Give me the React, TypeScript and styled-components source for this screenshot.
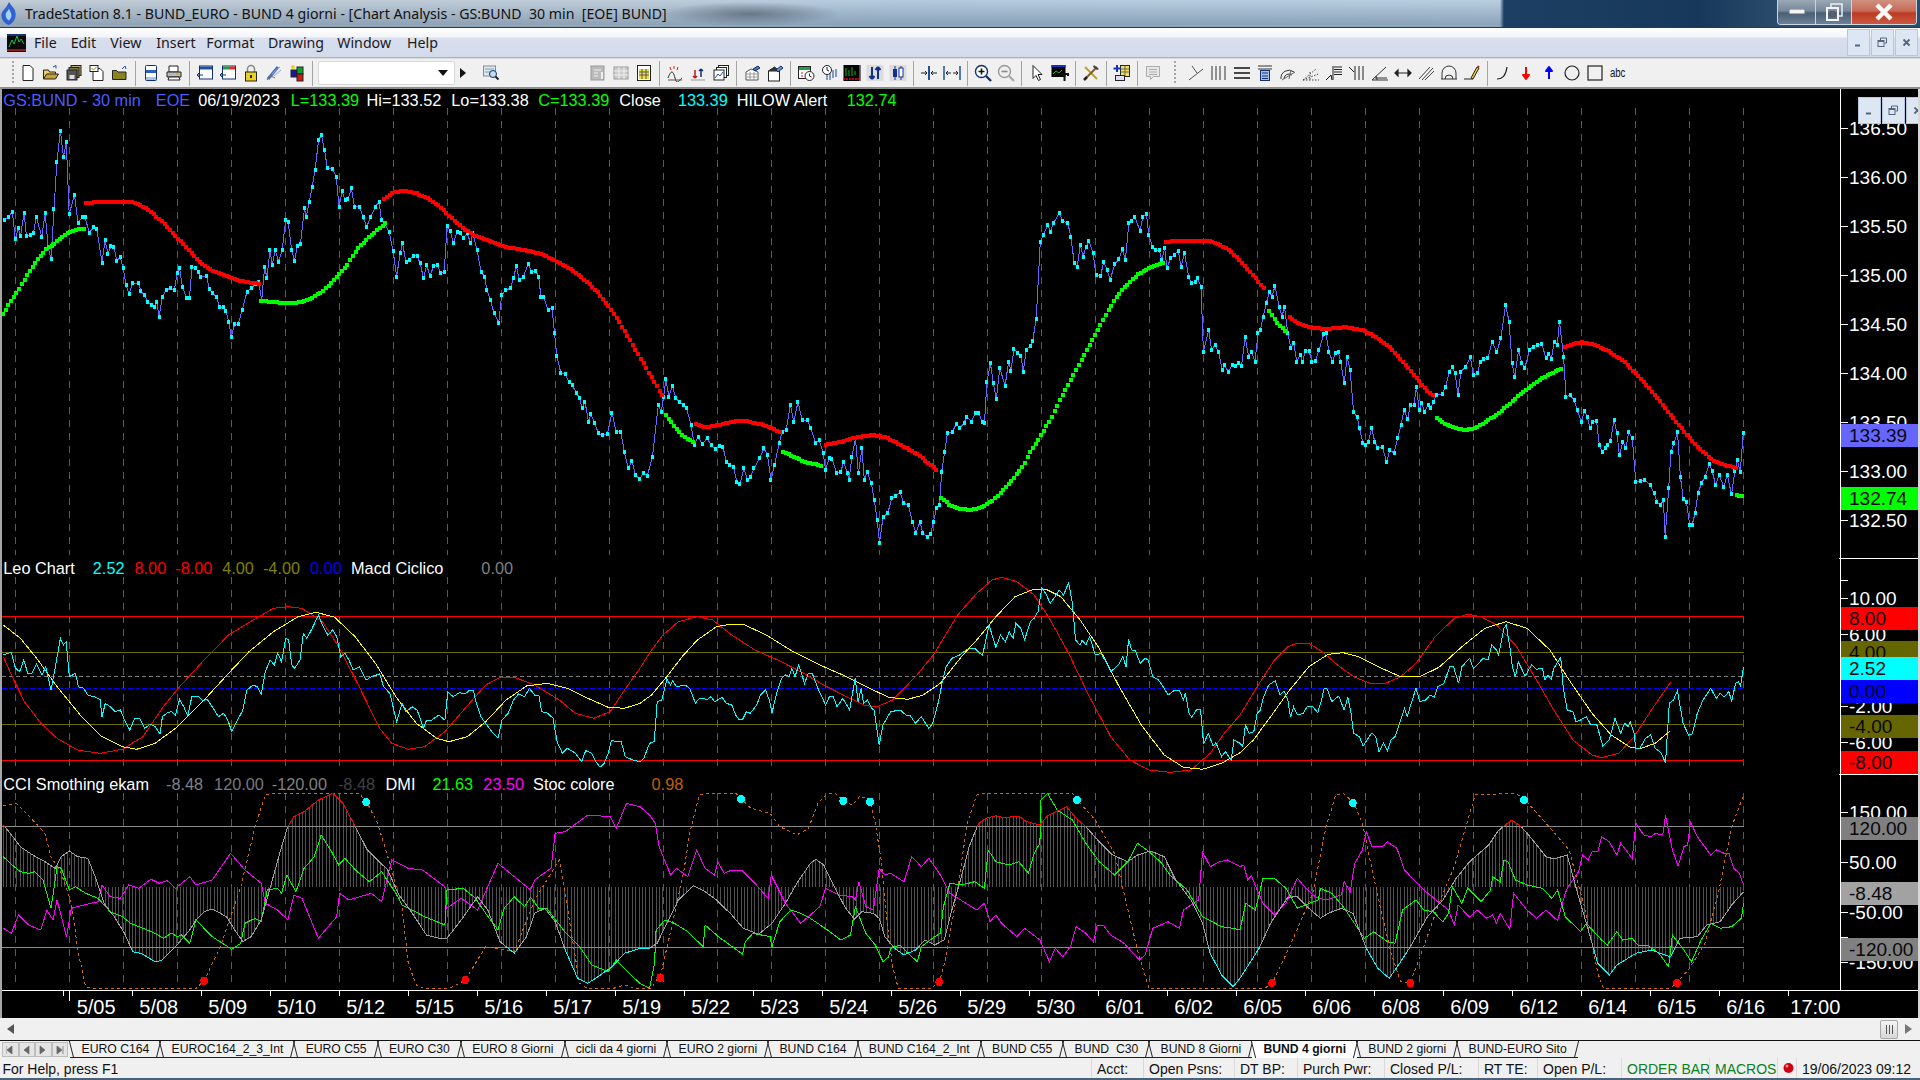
import React from "react";
import styled, { createGlobalStyle } from "styled-components";

const GlobalStyle = createGlobalStyle`
  html, body { margin: 0; padding: 0; background: #000; overflow: hidden; }
  * { box-sizing: border-box; }
`;

/* ---------- traced data: flat x,y pairs read off the crops of the chart ---------- */
type Zone = { x: number; y: number; k: number };
type Pt = [number, number];
const Z8: Zone = { x: 0, y: 540, k: 2.45 };
const Z9: Zone = { x: 0, y: 100, k: 1568 / 920 };
const Z10: Zone = { x: 920, y: 100, k: 1568 / 920 };
const Z11: Zone = { x: 640, y: 560, k: 1568 / 600 };
const Z12: Zone = { x: 1240, y: 560, k: 1568 / 600 };

const conv = (z: Zone, d: number[]): Pt[] => {
  const out: Pt[] = [];
  for (let i = 0; i < d.length; i += 2) out.push([z.x + d[i] / z.k, z.y + d[i + 1] / 3]);
  return out;
};
const join = (...parts: Pt[][]): Pt[] => {
  const out: Pt[] = [];
  parts.forEach((p) => p.forEach((q) => {
    if (!out.length || q[0] > out[out.length - 1][0] - 0.01) out.push(q);
  }));
  return out;
};
const str = (p: Pt[]) => p.map((q) => q[0].toFixed(1) + "," + q[1].toFixed(1)).join(" ");
const yAt = (p: Pt[], x: number) => {
  for (let i = 1; i < p.length; i++) {
    if (x <= p[i][0]) {
      const t = (x - p[i - 1][0]) / (p[i][0] - p[i - 1][0] || 1);
      return p[i - 1][1] + (p[i][1] - p[i - 1][1]) * t;
    }
  }
  return p[p.length - 1][1];
};
const sample = (p: Pt[], step: number): Pt[] => {
  const out: Pt[] = [];
  for (let x = p[0][0]; x <= p[p.length - 1][0]; x += step) out.push([x, yAt(p, x)]);
  return out;
};

const price = join(conv(Z9, [8,360,15,350,21,335,26,418,31,385,35,408,41,338,45,408,52,405,57,400,62,350,71,410,77,340,82,440,87,478,92,328,97,185,103,92,108,170,113,127,118,342,127,285,133,368,140,352,145,352,152,398,160,382,165,388,174,488,179,420,184,462,189,438,194,440,199,482,205,472,210,505,215,555,220,582,226,550,236,550,240,573,246,585,252,605,258,615,263,622,267,605,271,650,277,590,283,570,290,565,297,570,302,518,306,505,311,560,318,595,323,593,327,502,333,503,338,515,342,530,352,528,357,568,362,578,369,592,374,620,381,622,385,632,390,665,394,710,400,672,406,672,413,630,421,575,428,565,436,552,441,545,446,602,451,500,455,535,460,450,464,495,469,450,475,485,481,450,487,360,491,365,497,450,502,482,507,438,512,432,519,325,522,350,527,305,532,262,537,210,543,120,548,105,553,150,558,205,567,207,573,230,578,322,583,272,588,300,593,298,599,265,604,320,613,320,619,352,625,380,632,350,640,320,646,305,650,360,656,372,663,395,670,452,676,530,682,460,686,430,692,487,698,480,704,467,711,467,716,490,722,535,727,495,733,528,739,498,746,495,750,518,757,515,762,378,767,392,773,430,779,395,785,400,790,415,796,400,802,428,806,400,813,450,820,515,826,530,830,570,836,600,842,640,850,668,855,585,862,570,870,565,875,535,880,498,885,540,892,530,900,492,906,515,913,512,918,530,922,590,927,592,934,630,941,625,945,700,949,767,956,820,963,822,970,845,975,855,983,880,988,895,992,925,997,905,1003,965,1007,942,1013,968,1020,1000,1027,1005,1035,1002,1043,938,1050,995,1058,995,1064,1055,1071,1105,1077,1082,1083,1125,1090,1138,1096,1120,1103,1128,1112,1072,1122,915,1127,935,1131,890,1135,838,1140,890,1146,858,1152,895,1158,905,1165,915,1170,925,1178,975,1183,1035,1190,1010,1197,1032,1205,1015,1212,1035,1220,1048,1227,1037,1232,1040,1238,1085,1244,1095,1250,1100,1256,1145,1261,1152,1268,1105,1274,1140,1279,1130,1285,1105,1295,1075,1302,1045,1308,1065,1314,1140,1320,1095,1328,1030,1333,995,1340,990,1347,915,1353,965,1360,905,1367,960,1376,960,1382,985,1390,1030,1396,1020,1403,1060,1407,1110,1413,1075,1418,1078,1426,1118,1433,1115,1438,1085,1444,1120,1447,1140,1452,1070,1458,1015,1463,1120,1469,1045,1473,1140,1478,1115,1485,1150,1490,1200,1495,1260,1499,1330,1505,1252,1513,1240,1520,1195,1527,1188,1534,1175,1540,1210,1548,1215,1555,1265,1561,1300]),
  conv(Z10, [0,1265,5,1300,12,1310,18,1302,23,1265,28,1225,33,1215,37,1115,42,1055,47,998,55,995,62,972,68,985,75,968,80,950,88,965,94,938,100,938,106,965,110,968,114,845,120,790,125,850,130,897,136,805,145,857,151,785,155,812,160,748,167,758,172,768,176,815,181,750,188,738,192,722,198,657,205,425,210,405,218,375,222,395,228,368,237,340,243,362,252,370,257,410,263,490,268,500,273,435,278,470,283,440,288,422,295,460,300,525,308,528,313,485,319,510,324,540,332,492,339,478,345,448,350,480,356,368,361,362,366,350,375,392,380,350,386,342,390,405,396,440,401,450,408,450,412,480,417,445,421,505,427,475,433,465,440,452,445,500,451,460,458,532,463,550,470,545,473,535,479,560,483,755,492,690,497,750,503,735,509,757,515,810,519,795,526,817,532,795,538,797,542,790,548,797,554,712,560,770,565,755,571,785,576,700,580,690,585,650,590,610,596,575,600,590,605,558,612,620,617,650,621,620,627,700,632,745,637,730,642,785,648,765,652,785,657,752,663,752,668,785,674,782,680,750,688,703,692,700,697,755,703,785,708,760,713,755,717,785,723,850,728,770,733,810,739,937,745,950,749,985,755,1030,760,1035,764,1025,770,985,775,1025,780,1045,788,1040,795,1085,801,1050,808,1060,814,1015,820,975,825,930,831,958,836,915,842,915,846,860,851,930,855,910,860,935,866,915,870,925,875,905,880,885,890,882,896,860,902,815,907,800,912,820,917,885,922,815,930,800,938,772,943,825,950,820,955,785,961,778,968,775,975,725,983,755,990,715,998,615,1004,665,1009,790,1014,830,1020,750,1026,790,1031,803,1039,750,1045,740,1052,735,1060,733,1067,775,1072,762,1076,778,1081,725,1086,735,1090,665,1097,770,1101,890,1108,885,1115,900,1120,930,1127,965,1133,932,1137,950,1142,985,1147,965,1153,963,1158,1035,1163,1055,1168,1045,1172,1035,1177,1022,1183,960,1188,1000,1192,1065,1198,1025,1203,1045,1208,995,1214,1015,1220,1145,1228,1143,1235,1140,1245,1155,1251,1180,1256,1205,1262,1215,1267,1200,1270,1310,1276,1165,1280,1055,1285,1030,1291,995,1296,1130,1301,1198,1306,1205,1312,1275,1316,1275,1321,1240,1326,1180,1332,1150,1338,1130,1345,1092,1350,1112,1356,1155,1362,1125,1370,1160,1376,1125,1383,1183,1389,1112,1393,1080,1398,1115,1403,1000]));

const maSegments: { color: string; pts: Pt[] }[] = [
  { color: "#00ff00", pts: conv(Z9, [5,642,20,600,35,560,50,515,65,478,80,445,92,432,105,412,120,395,135,385,147,388]) },
  { color: "#ff0000", pts: conv(Z9, [147,310,165,306,225,305,240,315,260,340,280,370,300,410,320,445,340,485,355,505,375,522,400,538,425,548,445,552]) },
  { color: "#00ff00", pts: conv(Z9, [445,602,470,607,490,610,510,607,530,595,550,575,570,540,590,500,610,445,630,410,657,370]) },
  { color: "#ff0000", pts: conv(Z9, [655,298,670,277,690,272,710,280,730,295,750,320,770,355,790,385,810,408,840,428,865,442,890,450,920,460,945,480,975,510,1000,545,1020,580,1040,625,1060,680,1080,740,1100,800,1120,860,1132,895]) },
  { color: "#00ff00", pts: conv(Z9, [1135,945,1150,980,1165,1010,1185,1030]) },
  { color: "#ff0000", pts: conv(Z9, [1186,973,1205,982,1225,975,1250,965,1270,963,1295,972,1315,985,1332,998]) },
  { color: "#00ff00", pts: conv(Z9, [1335,1055,1355,1072,1375,1088,1400,1097]) },
  { color: "#ff0000", pts: join(conv(Z9, [1407,1035,1430,1027,1460,1012,1490,1005,1510,1012,1535,1035,1568,1068]), conv(Z10, [15,1090,32,1115])) },
  { color: "#00ff00", pts: conv(Z10, [36,1193,50,1215,65,1225,85,1230,105,1222,125,1200,140,1175,155,1145,175,1100,190,1050,205,1010,225,950,240,895,260,830,275,780,295,715,315,650,335,590,350,560,370,525,390,505,417,488]) },
  { color: "#ff0000", pts: conv(Z10, [420,425,440,423,490,422,510,432,530,455,550,490,570,530,590,575]) },
  { color: "#00ff00", pts: conv(Z10, [595,632,605,660,615,680,627,700]) },
  { color: "#ff0000", pts: conv(Z10, [630,650,645,670,665,682,690,687,725,682,755,690,780,715,800,740,820,780,840,820,860,865,877,890]) },
  { color: "#00ff00", pts: conv(Z10, [881,955,895,972,915,985,930,990,945,985,965,965,990,935,1015,895,1040,860,1065,830,1097,802]) },
  { color: "#ff0000", pts: conv(Z10, [1100,742,1115,730,1130,727,1150,735,1175,755,1200,785,1225,830,1250,880,1275,935,1300,990,1325,1040,1350,1080,1375,1097,1390,1103]) },
  { color: "#00ff00", pts: conv(Z10, [1392,1186,1405,1190]) },
];

const oscCyan = join(conv(Z8, [8,345,18,340,28,338,38,385,48,395,58,360,68,400,78,400,90,372,103,405,112,380,125,450,135,385,148,295,155,315,162,305,170,410,185,400,192,440,205,445,215,465,230,470,245,478,250,530,258,490,270,500,282,515,295,510,305,540,318,570,330,535,342,535,355,565,368,552,380,560,392,582,398,530,410,518,420,515,430,525,440,478,450,500,460,528,470,470,485,468,497,482,508,478,520,500,535,530,548,520,558,540,568,575,580,545,595,510,605,450,620,435,630,440,640,462,650,395,662,360,672,375,680,340,690,365,700,295,707,300,715,375,722,385,735,360,743,280,752,295,765,265,780,225,790,255,803,285,815,270,825,290,835,350,845,340,855,360,865,390,880,380,897,420,910,410,930,402,940,440,955,460,972,545,985,490,995,515,1010,500,1022,510,1038,565,1045,540,1058,540,1075,525,1090,540,1097,455,1110,470,1125,458,1140,462,1150,450,1160,450,1165,480,1178,530,1190,550,1205,575,1220,595,1230,540,1245,520,1258,480,1270,462,1285,470,1297,445,1310,465,1320,465,1327,515,1342,520,1355,535,1365,605,1378,640,1390,625,1410,640,1425,665,1435,632,1450,640,1460,665,1470,682,1480,670,1490,640,1498,600,1510,605,1522,605,1532,650,1550,660]),
  conv(Z11, [0,605,10,595,25,550,37,545,45,425,57,420,70,358,80,375,85,362,95,380,105,378,118,375,130,385,145,430,155,415,165,415,175,420,185,410,195,425,215,412,225,430,240,435,250,465,258,478,268,478,278,455,288,460,305,435,315,405,328,390,338,420,345,458,358,395,370,355,380,345,390,350,397,325,405,350,415,315,430,370,440,340,450,340,465,385,485,435,495,410,505,410,515,440,530,415,548,450,562,355,570,425,578,385,584,430,595,420,605,445,612,450,625,555,635,495,655,455,680,450,695,465,705,465,720,490,735,470,755,505,765,490,780,425,790,365,800,320,815,295,835,285,855,268,875,265,895,287,912,195,930,262,942,225,955,245,965,215,975,235,982,190,995,205,1005,240,1020,185,1030,175,1040,155,1050,85,1060,100,1072,130,1085,110,1095,90,1107,105,1120,68,1130,130,1138,240,1150,255,1155,240,1165,255,1175,230,1190,285,1205,280,1215,300,1230,335,1250,315,1262,290,1270,320,1277,238,1285,270,1295,272,1307,310,1320,295,1328,300,1340,350,1355,360,1370,385,1380,405,1395,392,1410,392,1420,420,1425,400,1435,460,1442,472,1455,448,1465,450,1473,553,1485,520,1498,558,1505,548,1520,590,1530,575,1545,600,1552,540]),
  conv(Z12, [0,550,7,560,14,495,24,520,36,515,45,460,53,450,62,410,75,375,92,362,105,405,115,392,125,420,132,472,140,440,150,465,165,460,175,440,190,440,203,458,212,425,220,385,227,385,240,425,258,408,272,450,282,412,290,460,297,520,312,530,322,558,335,535,345,518,355,530,363,575,375,550,385,572,395,540,405,530,420,480,430,445,437,470,447,432,460,385,470,425,485,420,497,405,508,412,517,380,533,370,548,320,558,320,571,370,580,320,600,295,610,325,620,315,635,295,648,300,658,255,670,270,676,285,690,205,696,195,705,260,712,320,720,352,727,305,745,348,762,315,775,328,790,325,797,360,805,345,813,358,820,325,838,292,845,385,855,450,870,455,878,485,890,480,905,470,917,495,932,492,948,558,965,540,980,475,995,520,1005,490,1015,500,1020,485,1030,520,1034,565,1045,565,1060,535,1073,525,1085,565,1100,578,1112,608,1122,430,1133,420,1143,392,1158,490,1172,525,1182,522,1195,460,1210,420,1230,385,1245,415,1255,400,1265,410,1278,395,1285,425,1295,370,1303,365,1308,378,1316,320]));

const oscRed = join(conv(Z8, [8,350,30,410,60,485,100,550,140,595,190,630,245,640,300,628,350,590,400,500,440,440,500,360,560,285,620,240,670,205,705,200,740,205,790,245,830,320,880,440,930,565,960,610,1000,628,1040,620,1090,575,1150,490,1190,435,1225,412,1260,412,1310,435,1370,480,1410,520,1455,535,1495,515,1530,450]),
  conv(Z11, [0,325,30,270,60,225,100,185,150,170,190,180,240,225,300,270,360,300,420,335,480,375,540,410,590,437,620,440,660,420,720,350,770,280,830,165,880,100,920,60,945,52,985,65,1030,105,1070,175,1120,280,1170,400,1230,530,1280,600,1330,630,1385,637,1440,630,1490,580,1530,515]),
  conv(Z12, [0,465,45,380,90,300,125,260,150,250,180,250,215,275,260,320,300,352,340,370,380,370,420,350,460,310,510,230,560,175,595,163,630,170,670,195,720,255,770,350,820,450,870,540,920,585,945,593,990,580,1030,530,1075,450,1125,367]));

const oscYellow = join(conv(Z8, [8,255,50,295,90,355,140,440,200,530,250,590,300,620,335,628,380,610,430,565,500,480,560,400,610,335,670,275,730,230,775,217,820,232,870,290,920,370,970,470,1020,550,1070,595,1100,605,1145,590,1190,545,1240,480,1290,438,1340,430,1390,445,1440,475,1490,502,1530,505]),
  conv(Z11, [0,430,30,405,70,350,110,290,150,240,200,200,240,192,270,193,330,225,400,275,470,315,540,350,600,385,650,412,700,418,740,405,785,370,840,290,880,240,930,170,980,110,1030,87,1060,87,1100,110,1150,180,1200,265,1250,375,1310,495,1370,585,1420,622,1470,628,1520,610]),
  conv(Z12, [0,578,35,540,80,470,130,390,180,320,230,283,270,278,310,290,370,325,420,350,470,350,520,322,580,260,640,205,695,185,750,205,810,270,860,360,920,460,970,525,1020,562,1045,566,1085,550,1125,512]));

const cci = join(conv(Z8, [8,855,25,880,50,920,80,945,110,965,135,985,150,950,170,933,190,950,215,955,235,1015,255,1090,280,1130,305,1180,325,1235,345,1240,380,1265,395,1262,430,1220,465,1170,480,1140,500,1115,520,1107,555,1130,575,1170,595,1205,615,1190,640,1140,665,1030,690,920,705,860,720,830,745,815,780,780,815,760,840,790,875,870,900,930,925,960,950,990,975,1060,1010,1120,1045,1185,1075,1195,1095,1195,1130,1140,1170,1070,1195,1110,1225,1205,1260,1240,1290,1190,1310,1120,1335,1105,1360,1145,1385,1230,1415,1315,1440,1330,1465,1310,1500,1280,1530,1240]),
  conv(Z11, [0,1165,25,1165,45,1150,70,1090,100,1020,140,977,170,995,200,1020,240,1065,270,1105,310,1123,345,1090,380,1030,410,970,445,910,460,898,480,915,510,985,535,1040,560,1078,580,1055,610,1060,625,1075,640,1130,665,1165,690,1185,720,1170,745,1140,770,1155,795,1140,815,1050,840,950,860,860,885,790,905,775,930,767,950,773,990,768,1010,785,1045,795,1065,767,1115,740,1140,775,1165,800,1200,845,1235,885,1275,905,1300,885,1335,873,1370,890,1400,960,1440,1020,1470,1090,1490,1180,1520,1245,1550,1280]),
  conv(Z12, [0,1255,50,1165,80,1090,125,1012,150,1010,180,1045,210,1075,230,1060,265,1045,295,1060,330,1165,360,1225,390,1255,420,1205,445,1160,490,1070,530,1020,565,955,600,905,650,855,675,812,710,780,735,800,765,840,800,890,820,897,855,885,880,990,905,1090,935,1210,965,1245,985,1215,1035,1180,1075,1170,1110,1185,1125,1190,1150,1135,1195,1130,1220,1095,1255,1085,1285,1035,1316,995]));

const dmiGreen = join(conv(Z8, [8,950,30,975,50,995,70,1000,85,995,105,1020,125,1105,140,980,150,985,170,1050,185,1040,210,1060,240,1075,270,1115,300,1130,320,1150,350,1165,380,1180,400,1195,420,1180,435,1190,445,1185,465,1210,480,1140,520,1190,568,1228,590,1210,600,1150,625,1135,640,1145,655,1050,680,1045,690,1060,703,1005,725,1055,745,985,770,950,787,885,810,930,830,975,845,955,875,995,905,1025,935,995,970,1060,985,1095,1010,1110,1040,1130,1090,1155,1095,1050,1135,1045,1165,1075,1190,1120,1220,1170,1235,1105,1260,1070,1285,1100,1300,1072,1320,1105,1340,1105,1380,1170,1420,1220,1450,1275,1490,1295,1510,1260,1550,1310]),
  conv(Z11, [0,1270,25,1285,38,1210,42,1110,50,1100,65,1080,90,1090,125,1115,165,1160,170,1095,205,1130,235,1155,268,1183,275,1145,295,1120,340,1130,345,1160,365,1085,395,1050,420,1060,445,1075,490,1110,525,1140,550,1125,563,1040,590,1120,615,1155,635,1205,650,1190,655,1165,680,1155,700,1180,725,1205,735,1160,770,1130,785,1120,793,1040,810,970,840,975,875,965,900,985,910,870,930,905,965,915,990,905,1015,940,1030,880,1045,850,1048,720,1065,700,1090,750,1130,780,1165,850,1200,905,1240,945,1275,905,1300,850,1325,870,1360,905,1385,945,1430,990,1450,1030,1470,1070,1520,1100,1550,1105]),
  conv(Z12, [0,1110,15,1030,40,1050,60,955,90,955,120,985,150,1045,170,1035,205,1020,210,985,240,1000,270,1040,305,1100,325,1135,350,1115,385,1145,405,1150,425,1050,460,1020,480,1050,505,1055,530,1085,545,1060,555,980,580,1030,595,985,630,1025,655,990,660,950,680,965,690,900,700,905,720,960,750,975,790,985,815,1015,830,990,850,1070,890,1115,905,1090,945,1140,960,1155,985,1115,1000,1140,1025,1135,1040,1155,1065,1155,1095,1180,1120,1220,1130,1125,1160,1170,1180,1205,1205,1140,1230,1090,1255,1105,1285,1100,1310,1075,1316,1030]));

const dmiMagenta = join(conv(Z8, [8,1165,28,1180,45,1125,70,1155,100,1170,115,1110,130,1140,140,1080,163,1190,175,1105,205,1095,240,1085,250,1035,270,1070,295,1075,315,1035,340,1045,370,1018,390,1030,410,1022,430,1045,465,1010,480,1035,520,1020,565,940,600,990,640,1030,650,1090,680,1110,705,1140,720,1065,740,1075,780,1195,825,1130,832,1060,855,1080,910,1060,935,1085,960,960,1000,985,1035,990,1090,1040,1095,1105,1130,1075,1170,1110,1220,970,1250,1000,1300,1050,1310,1020,1350,985,1360,880,1385,875,1440,825,1495,830,1510,865,1535,790]),
  conv(Z11, [0,740,25,765,40,790,50,860,80,945,95,925,125,950,148,870,170,925,195,945,203,905,220,940,240,930,265,930,300,970,335,1015,343,945,380,1030,420,1090,440,1070,470,1040,485,985,520,1005,555,1010,563,1020,572,965,590,1040,610,1050,625,925,640,945,655,940,690,965,710,890,735,920,755,895,785,945,810,1000,880,1050,900,1030,915,1085,930,1065,945,1090,985,1130,1005,1105,1045,1140,1070,1205,1085,1165,1105,1190,1125,1160,1140,1100,1165,1120,1185,1145,1195,1095,1210,1095,1230,1125,1265,1150,1305,1200,1320,1185,1340,1105,1380,1085,1410,1105,1420,1050,1460,1020,1470,875,1490,920,1515,905,1535,900]),
  conv(Z12, [0,920,10,915,20,960,30,948,45,990,60,1030,90,1065,120,1030,150,955,165,975,190,1005,205,1015,225,1020,265,1005,272,965,288,995,300,910,320,870,330,815,345,860,375,858,385,845,410,865,430,930,480,990,545,1050,560,1095,570,1035,600,1072,620,1050,645,1075,660,1065,670,1090,680,1060,705,1108,715,1000,750,1050,775,1075,800,1050,830,1082,840,1040,850,1000,855,985,885,935,895,885,910,900,920,875,935,875,945,830,965,845,985,885,995,850,1025,895,1035,790,1055,825,1075,830,1085,820,1105,825,1112,765,1130,870,1145,918,1160,860,1170,855,1177,785,1195,830,1230,885,1245,870,1265,880,1278,880,1290,925,1305,940,1316,975]));

const stoch = join(conv(Z8, [8,797,40,790,80,840,110,880,125,950,150,1000,170,1070,180,1130,190,1230,210,1340,225,1346,480,1346,500,1322,540,1220,590,1040,625,860,650,765,665,760,880,760,900,790,925,850,950,950,985,1100,1000,1270,1020,1335,1040,1346,1100,1346,1140,1320,1190,1220,1235,1230,1260,1235,1310,1080,1370,960,1385,1060,1400,1180,1420,1330,1440,1346,1500,1346,1530,1335,1560,1346]),
  conv(Z11, [30,1285,55,1240,85,1090,115,930,130,820,155,705,175,700,250,700,265,717,290,745,340,760,365,800,410,825,440,805,465,730,490,700,510,700,531,722,555,735,575,708,600,720,615,790,630,900,645,1080,660,1220,675,1285,760,1285,783,1265,800,1190,830,990,855,790,880,705,900,700,1130,700,1143,720,1190,780,1240,880,1265,1000,1300,1170,1330,1285,1560,1285]),
  conv(Z12, [65,1285,85,1268,130,1160,190,1000,225,800,250,705,270,700,297,728,320,790,340,900,370,1060,395,1180,420,1265,445,1268,480,1160,520,1030,560,920,590,800,615,705,720,700,745,720,800,790,860,870,900,1040,935,1240,950,1285,1125,1285,1142,1268,1175,1225,1215,1150,1250,1000,1285,800,1316,705]));

const cyanDots = [...conv(Z8, [897,786]), ...conv(Z11, [264,717,531,722,601,725,1142,720]), ...conv(Z12, [295,729,742,720])];
const redDots = [...conv(Z8, [500,1322,1140,1320]), ...conv(Z11, [53,1253,782,1266]), ...conv(Z12, [84,1269,445,1269,1142,1269])];

const GRID_END = 1743.5;
const gridXs = Array.from({ length: 33 }, (_, i) => 15.3 + i * 54);
const histo = sample(cci, 3.4).map((p) => `M${p[0].toFixed(1)} 887V${p[1].toFixed(1)}`).join("");

/* ---------- window frame ---------- */
const Page = styled.div`
  width: 1920px;
  height: 1080px;
  display: flex;
  flex-direction: column;
  background: #f0f0f0;
  font-family: "Liberation Sans", Arial, sans-serif;
  overflow: hidden;
`;
const TitleBar = styled.div`
  height: 28px;
  flex: none;
  display: flex;
  align-items: flex-start;
  border-bottom: 1px solid #2a3a48;
  background:
    linear-gradient(90deg, transparent 1500px, #1c3f63 1504px, #17385a 1700px, #2b4c6c 1780px),
    radial-gradient(ellipse 90px 12px at 750px 14px, rgba(85, 100, 115, 0.75), transparent),
    linear-gradient(180deg, rgba(190, 200, 210, 0.55), rgba(130, 150, 170, 0.75) 85%),
    linear-gradient(90deg, #c6d2dc 0, #c0d2e2 600px, #a9cfee 900px, #b3d6f3 1500px);
`;
const TitleIcon = styled.svg`
  margin: 2px 0 0 1px;
  flex: none;
`;
const TitleText = styled.div`
  flex: 1;
  margin-left: 8px;
  font-family: "Noto Sans", sans-serif;
  font-size: 14.15px;
  line-height: 28px;
  color: #111;
  white-space: pre;
`;
const WindowButtons = styled.div`
  display: flex;
  height: 25px;
  margin-right: 3px;
  border: 1px solid #c9d6e2;
  border-top: 0;
  border-radius: 0 0 4px 4px;
  overflow: hidden;
`;
const WindowButton = styled.div<{ $w: number; $close?: boolean }>`
  width: ${(p) => p.$w}px;
  display: flex;
  align-items: center;
  justify-content: center;
  border-right: 1px solid #c9d6e2;
  background: ${(p) =>
    p.$close
      ? "linear-gradient(180deg, #d0907f 0, #c86a58 45%, #bd3a22 55%, #c85a40 100%)"
      : "linear-gradient(180deg, #9aa8b5 0, #76889a 45%, #4a5e74 55%, #6d8298 100%)"};
  &:last-child { border-right: 0; }
`;
const MenuBar = styled.div`
  height: 30px;
  flex: none;
  display: flex;
  align-items: center;
  border-bottom: 1px solid #aab0ba;
  background: linear-gradient(180deg, #fff 0, #f4f5f9 30%, #d8deee 36%, #d3dbeb 100%);
`;
const AppIcon = styled.svg`
  margin-left: 7px;
  margin-right: 8px;
  flex: none;
`;
const MenuItem = styled.span<{ $w: number }>`
  width: ${(p) => p.$w}px;
  font-family: "Noto Sans", sans-serif;
  font-size: 14.2px;
  color: #1a1a1a;
`;
const MdiButtons = styled.div`
  margin-left: auto;
  margin-right: 2px;
  display: flex;
  gap: 1px;
`;
const MdiButton = styled.div`
  width: 23px;
  height: 27px;
  display: flex;
  align-items: center;
  justify-content: center;
  background: #dde7f4;
  border: 1px solid #b8c8da;
  color: #50606f;
`;
const FloatButtons = styled.div`
  position: absolute;
  top: 8px;
  left: 1856px;
  display: flex;
  gap: 1px;
  z-index: 3;
`;
const Toolbar = styled.div`
  height: 31px;
  flex: none;
  display: flex;
  align-items: center;
  padding-left: 9px;
  background: #f0f0f0;
  border-top: 1px solid #dcdcdc;
  border-bottom: 2px solid #8d8d8d;
`;
const Grip = styled.div<{ $w: number }>`
  width: ${(p) => p.$w}px;
  height: 24px;
  flex: none;
  background: repeating-linear-gradient(180deg, #a8a8a8 0 2px, transparent 2px 4px) center / 2px 100% no-repeat;
`;
const Tool = styled.div<{ $w?: number; $ml?: number }>`
  width: ${(p) => p.$w ?? 23}px;
  margin-left: ${(p) => p.$ml ?? 0}px;
  height: 24px;
  flex: none;
  display: flex;
  align-items: center;
  justify-content: center;
`;
const Sep = styled.div`
  width: 8px;
  height: 25px;
  flex: none;
  background: linear-gradient(#a4a4a4, #a4a4a4) center / 1px 100% no-repeat;
`;
const Combo = styled.div`
  width: 137px;
  height: 24px;
  flex: none;
  margin-left: 2px;
  display: flex;
  align-items: center;
  justify-content: flex-end;
  padding-right: 6px;
  background: #fff;
  border: 1px solid #d8d8d8;
  border-radius: 2px;
`;
const AbcLabel = styled.span`
  font-size: 12px;
  color: #111;
  transform: scaleX(0.8);
`;

/* ---------- chart ---------- */
const ChartFrame = styled.div`
  position: relative;
  height: 929px;
  flex: none;
  background: #000;
  border-left: 2px solid #a6a6a6;
  border-right: 2px solid #d8d8d8;
  overflow: hidden;
`;
const Panes = styled.div`
  display: flex;
  height: 901px;
`;
const Plot = styled.div`
  position: relative;
  width: 1838px;
  flex: none;
`;
const PlotSvg = styled.svg`
  display: block;
`;
const Legend = styled.div<{ $top: number }>`
  position: absolute;
  top: ${(p) => p.$top}px;
  left: 1.3px;
  display: flex;
  font-size: 16.3px;
  line-height: 20px;
  white-space: pre;
`;
const LegendItem = styled.span<{ $c: string; $gap: number }>`
  color: ${(p) => p.$c};
  margin-left: ${(p) => p.$gap}px;
`;
const Scale = styled.div`
  position: relative;
  flex: 1;
  border-left: 1px solid #fff;
`;
const Tick = styled.div`
  position: absolute;
  left: 0;
  width: 7px;
  height: 1px;
  background: #fff;
`;
const ScaleLabel = styled.div`
  position: absolute;
  left: 8px;
  font-size: 19px;
  line-height: 20px;
  color: #fff;
  transform: translateY(calc(-50% + 1px));
`;
const ScaleTag = styled.div<{ $bg: string }>`
  position: absolute;
  left: 0;
  right: 0;
  height: 23px;
  padding-left: 8px;
  font-size: 19px;
  line-height: 23px;
  color: #08080c;
  background: ${(p) => p.$bg};
`;
const ScaleRule = styled.div`
  position: absolute;
  left: -2px;
  right: 0;
  height: 1px;
  background: #fff;
`;
const DateAxis = styled.div`
  display: flex;
  height: 28px;
  padding-left: 61.3px;
  border-top: 1px solid #fff;
`;
const DateCell = styled.div<{ $pad: number; $first?: boolean }>`
  position: relative;
  width: 69px;
  flex: none;
  padding: 5px 0 0 ${(p) => p.$pad}px;
  font-size: 20px;
  line-height: 22px;
  color: #fff;
  white-space: nowrap;
  &::before {
    content: "";
    position: absolute;
    left: 0;
    top: 0;
    width: 1px;
    height: 5px;
    background: #fff;
  }
  ${(p) =>
    p.$first &&
    `&::after {
      content: "";
      position: absolute;
      left: 6px;
      top: 0;
      width: 1px;
      height: 10px;
      background: #fff;
    }`}
`;
const ScrollRow = styled.div`
  height: 22px;
  flex: none;
  display: flex;
  align-items: center;
  justify-content: space-between;
  padding: 0 8px 0 7px;
  background: #f0f0f0;
`;
const ScrollRight = styled.div`
  display: flex;
  align-items: center;
  gap: 7px;
`;
const ScrollThumb = styled.div`
  width: 18px;
  height: 19px;
  display: flex;
  align-items: center;
  justify-content: center;
  gap: 2px;
  background: linear-gradient(180deg, #f4f4f4, #d8d8d8);
  border: 1px solid #a8a8a8;
  border-radius: 2px;
  & > i { width: 1px; height: 9px; background: #555; }
`;
const TabRow = styled.div`
  height: 18px;
  flex: none;
  display: flex;
  background: #f0f0f0;
  border-top: 1px solid #111;
`;
const TabNav = styled.div`
  width: 70.4px;
  flex: none;
  display: flex;
  padding-left: 2px;
  padding-top: 1px;
`;
const TabNavButton = styled.div`
  width: 16.5px;
  height: 15px;
  display: flex;
  align-items: center;
  justify-content: center;
  background: #e4e4e4;
  border: 1px solid #bdbdbd;
`;
const Tab = styled.div<{ $active?: boolean }>`
  position: relative;
  flex: none;
  padding: 0 11.15px;
  font-size: 12.2px;
  line-height: 17px;
  color: #111;
  white-space: pre;
  background: ${(p) => (p.$active ? "#fff" : "transparent")};
  font-weight: ${(p) => (p.$active ? 700 : 400)};
  border-bottom: 1px solid ${(p) => (p.$active ? "#fff" : "#222")};
  height: 17px;
  &::before, &::after {
    content: "";
    position: absolute;
    top: 0;
    height: 17px;
    width: 1px;
    background: #222;
  }
  &::before { left: 1px; transform: skewX(14deg); }
  &::after { right: 1px; transform: skewX(-14deg); }
`;
const StatusBar = styled.div`
  height: 20px;
  flex: none;
  display: flex;
  background: #f0f0f0;
  font-size: 14px;
  line-height: 22px;
  color: #111;
  white-space: nowrap;
`;
const StatusMain = styled.div`
  flex: 1;
  padding-left: 2.4px;
`;
const StatusPane = styled.div<{ $w: number; $green?: boolean }>`
  width: ${(p) => p.$w}px;
  flex: none;
  padding-left: 5px;
  border-left: 1px solid #d9d9d9;
  color: ${(p) => (p.$green ? "#0a8020" : "#111")};
`;
const BottomEdge = styled.div`
  height: 2px;
  flex: none;
  background: #47627a;
`;

/* ---------- toolbar drawings ---------- */
const Ico: React.FC<{ children: React.ReactNode }> = ({ children }) => (
  <svg width="18" height="18" viewBox="0 0 18 18" fill="none">{children}</svg>
);
const K = "#222";
const icons: Record<string, React.ReactNode> = {
  doc: <path d="M4 1.5h7l3 3v12H4z" fill="#fff" stroke={K} />,
  open: <><path d="M1.5 15V6h5l1 2h6v2" fill="#e8d070" stroke={K} /><path d="M1.5 15l3-5h12l-3 5z" fill="#c8a030" stroke={K} /><path d="M11 3l3-1.5M14 1.5v3" stroke="#2050a0" /></>,
  saveall: <><rect x="6" y="1.5" width="10" height="10" fill="#b0a870" stroke={K} /><rect x="4" y="3.5" width="10" height="10" fill="#807840" stroke={K} /><rect x="2" y="6" width="10" height="10" fill="#555" stroke={K} /><rect x="4.5" y="11" width="5" height="4" fill="#ddd" /></>,
  paste: <><path d="M5 4.5h7l3 3v9H5z" fill="#fff" stroke={K} /><rect x="2" y="1.5" width="8" height="6" fill="#fff" stroke={K} /><path d="M3.5 4l2 2 3-3" stroke="#a08000" /></>,
  folderUp: <><path d="M1.5 15.5V6.5h4l1.5 1.5h8v7.500z" fill="#8a8420" stroke={K} /><path d="M11 5l3-3 1 3" stroke="#2050a0" fill="none" /></>,
  preview: <><rect x="3.500" y="1.500" width="11" height="15" rx="1" fill="#fff" stroke="#103070" /><rect x="4" y="6" width="10" height="3" fill="#2a60c0" /><rect x="4" y="13" width="10" height="3" fill="#a8c0e8" /></>,
  print: <><path d="M4 2h9v6H4z" fill="#fff" stroke={K} /><path d="M2 8h14v5H2z" fill="#bbb" stroke={K} /><path d="M4 13h10l1 3H3z" fill="#fff" stroke={K} /><path d="M11 10h3" stroke="#e0a000" /></>,
  winA: <><rect x="3.500" y="2" width="13" height="13" fill="#fff" stroke="#103070" /><rect x="4" y="2.500" width="12" height="3" fill="#2050a0" /><path d="M1 11h6M1 11l3-3M1 11l3 3" stroke="#103070" /></>,
  winB: <><rect x="3.500" y="2" width="13" height="13" fill="#fff" stroke="#103070" /><rect x="4" y="2.500" width="6" height="3" fill="#20a040" /><rect x="10" y="2.500" width="6" height="3" fill="#e03030" /><path d="M1 11h6M1 11l3-3M1 11l3 3" stroke="#103070" /></>,
  lock: <><path d="M5.500 8V5a3.500 3.500 0 0 1 7 0v3" stroke="#888" strokeWidth="1.500" /><rect x="3.500" y="8" width="11" height="9" fill="#e8d020" stroke={K} /><rect x="8" y="11" width="2" height="3" fill={K} /></>,
  wand: <><path d="M3 15L13 3" stroke="#5070c0" strokeWidth="3" /><path d="M2 16c2-4 5-4 8-2" stroke="#666" /><path d="M7 10l8-7M9 12l7-6" stroke="#90a8e0" /></>,
  cubes: <><rect x="3" y="6" width="6" height="7" fill="#1818a0" stroke={K} /><rect x="9" y="3" width="6" height="7" fill="#10a030" stroke={K} /><rect x="9" y="10" width="6" height="7" fill="#d01818" stroke={K} /><circle cx="5" cy="3" r="2" fill="#e8d020" /></>,
  lookup: <><rect x="1.500" y="2" width="12" height="10" fill="#dfe8f0" stroke="#889" /><path d="M3 5h9M3 8h9" stroke="#8898a8" /><circle cx="11" cy="10" r="3.500" fill="#bfe0f0" stroke="#103070" /><path d="M13.500 12.500l3 3" stroke={K} strokeWidth="2" /></>,
  grayCalc: <><rect x="2" y="2" width="13" height="14" fill="#bbb" stroke="#999" /><path d="M5 6h7M5 9h4M5 12h4" stroke="#eee" /><path d="M13 8v7" stroke="#eee" strokeWidth="2" /></>,
  grayGrid: <><rect x="2" y="3" width="14" height="12" fill="#ccc" stroke="#999" /><path d="M2 7h14M2 11h14M7 3v12M12 3v12" stroke="#eee" /></>,
  yellowDoc: <><rect x="2.500" y="1.500" width="13" height="15" fill="#fff" stroke={K} /><rect x="4" y="5" width="10" height="10" fill="#f0e040" /><path d="M4 8h10M4 11h10M7 5v10M11 5v10" stroke="#555" /></>,
  wave: <><path d="M2 14c3-8 5-8 7 0s4 2 7 0" stroke={K} /><path d="M4 3l1 3M8 2v3M12 3l-1 3" stroke="#d02020" /><path d="M2 16h14" stroke="#555" /></>,
  arrows: <><path d="M6 6v8M6 14l-2-2M6 14l2-2" stroke="#c01818" strokeWidth="1.500" /><path d="M12 13V5M12 5l-2 2M12 5l2 2" stroke="#103070" strokeWidth="1.500" /><path d="M2 16h14" stroke="#999" /></>,
  charts: <><rect x="6.500" y="1.500" width="10" height="10" fill="#fff" stroke={K} /><rect x="4.500" y="3.500" width="10" height="10" fill="#fff" stroke={K} /><rect x="2" y="6" width="10" height="10" fill="#fff" stroke={K} /><path d="M3 14l3-4 2 2 3-4" stroke="#2050a0" /></>,
  chartPen: <><path d="M3 16V8l5-3 7 3v8z" fill="#fff" stroke="#555" /><path d="M4 10h10M4 13h10M7 8v8M11 8v8" stroke="#999" /><path d="M10 5l5-3 2 2-5 3z" fill="#5070c0" stroke="#103070" /></>,
  boxPen: <><rect x="2.500" y="7" width="11" height="10" fill="#fff" stroke={K} /><path d="M2.500 7l6-4 5 4" fill="#333" stroke={K} /><path d="M10 6l5-4 2 2-5 4z" fill="#7090d0" stroke="#103070" /></>,
  cal: <><rect x="1.500" y="2.500" width="12" height="12" fill="#fff" stroke={K} /><rect x="2" y="3" width="11" height="3" fill="#20a040" /><circle cx="12.500" cy="12" r="4.500" fill="#fff" stroke={K} /><path d="M12.500 9.500V12l2 1" stroke={K} /><path d="M4 9h2M4 12h2" stroke="#d02020" /></>,
  clockMan: <><circle cx="7" cy="6" r="4.500" fill="#fff" stroke={K} /><path d="M7 3v3l2 1" stroke={K} /><path d="M7 11v5M10 9v7M13 6v8M16 5v8" stroke="#4060b0" strokeWidth="1.200" /></>,
  blackChart: <><rect x="0.500" y="1" width="17" height="16" fill="#000" /><path d="M3 4v8M6 6v6M9 3v9M12 7v4" stroke="#10c010" /><path d="M0 15h18" stroke="#e01010" strokeDasharray="2 1" strokeWidth="1.500" /><path d="M16.500 1v16" stroke="#e01010" /></>,
  updown: <><rect x="0.500" y="1" width="17" height="16" fill="#dcdcdc" /><path d="M6 3v12M6 15l-2.500-3M6 15l2.500-3" stroke="#103090" strokeWidth="2" /><path d="M12 15V3M12 3L9.500 6M12 3l2.500 3" stroke="#103090" strokeWidth="2" /></>,
  candle: <><rect x="0.500" y="1" width="17" height="16" fill="#dcdcdc" /><path d="M6 2v14M12 2v14" stroke="#103090" /><rect x="4" y="5" width="4" height="8" fill="#103090" /><rect x="10" y="4" width="4" height="9" fill="#fff" stroke="#103090" /></>,
  inout: <><path d="M9 2v14" stroke="#2050a0" strokeWidth="2" /><path d="M1 9h6M7 9L5 7M7 9l-2 2M17 9h-6M11 9l2-2M11 9l2 2" stroke={K} /></>,
  outin: <><path d="M1 2v14M17 2v14" stroke="#2050a0" strokeWidth="1.500" /><path d="M3 9h5M3 9l2-2M3 9l2 2M15 9h-5M15 9l-2-2M15 9l-2 2" stroke={K} /></>,
  zoomIn: <><circle cx="7.500" cy="7.500" r="6" fill="#fff" stroke="#103070" strokeWidth="1.400" /><path d="M4.500 7.500h6M7.500 4.500v6" stroke="#111" strokeWidth="1.600" /><path d="M12 12l5 5" stroke="#103070" strokeWidth="2.400" /></>,
  zoomOut: <><circle cx="7.500" cy="7.500" r="6" fill="#eee" stroke="#999" strokeWidth="1.400" /><path d="M4.500 7.500h6" stroke="#888" strokeWidth="1.600" /><path d="M12 12l5 5" stroke="#aaa" strokeWidth="2.400" /></>,
  cursor: <path d="M5 1.500v13l3-3 2.500 5 2-1-2.500-5h4z" fill="#fff" stroke={K} />,
  chartT: <><rect x="0.500" y="1" width="14" height="12" fill="#000" /><rect x="0.500" y="1" width="14" height="2" fill="#1830c0" /><path d="M2 10l3-3 3 2 3-3" stroke="#10c010" /><path d="M10 10h7v2M13.500 10v7" stroke="#111" strokeWidth="2" /></>,
  tools: <><path d="M3 3l12 12" stroke="#c0a020" strokeWidth="2" /><path d="M15 3L4 14" stroke="#806030" strokeWidth="2" /><path d="M12 1l5 4-2 1-4-3z" fill="#444" /><path d="M2 16l3-3" stroke="#222" strokeWidth="2.500" /></>,
  plusDoc: <><rect x="7.500" y="1.500" width="9" height="11" fill="#f0e060" stroke={K} /><path d="M7.500 5h9M7.500 8h9M12 1.500v11" stroke="#666" /><path d="M4 1v7M0.500 4.500h7" stroke="#1830c0" strokeWidth="2" /><rect x="2.500" y="11.500" width="9" height="5" fill="#dde" stroke="#223" /></>,
  grayNote: <><path d="M2.500 2.500h13v10h-6l-3 3v-3h-4z" fill="#e8e8e8" stroke="#aaa" /><path d="M5 5.500h8M5 8h8M5 10.500h8" stroke="#aaa" /></>,
  trend: <path d="M2 16L16 5M5 2l5 7" stroke="#555" />,
  vlines: <path d="M2 2v14M6 2v14M10 2v14M15 2v14" stroke="#333" />,
  hlines: <path d="M1 4h16M1 9h16M1 14h16" stroke="#111" strokeWidth="1.300" />,
  boxLines: <><path d="M2 2h14M2 5h14" stroke="#333" /><rect x="4.500" y="6.500" width="9" height="10" fill="#a8c0e8" stroke="#103070" /><path d="M6 9h6M6 12h6M6 14.500h6" stroke="#103070" /></>,
  arcs: <><path d="M2 15a8 8 0 0 1 13-7M5 15a5 5 0 0 1 8-4" stroke="#333" /><path d="M3 16L16 8M12 6l-2 9" stroke="#666" /></>,
  fan: <path d="M1 16h16M1 16L16 10M1 16L14 5M4 14h0M8 8v8" stroke="#444" strokeDasharray="1.500 1.500" />,
  fib: <><path d="M1 16l5-5 1 5" stroke="#111" /><path d="M9 3h8M9 5.500h8M9 8h8M9 10.500h8M8 2v14" stroke="#222" /></>,
  vfan: <path d="M1 3l5 5M7 2v14M11 2v14M15 2v14" stroke="#222" />,
  angle: <path d="M1 16h16M1 16L15 3M6 16a6 6 0 0 0-1-4M4 14h12" stroke="#333" />,
  both: <path d="M1 9h16M1 9l3-3v6zM17 9l-3-3v6z" stroke={K} fill={K} strokeWidth="1.200" />,
  parallel: <path d="M2 15L13 3M5 16L16 4M8 16L17 7" stroke="#444" />,
  archesI: <><path d="M2 15V9a7 7 0 0 1 14 0v6" stroke="#333" /><path d="M5 15a4 4 0 0 1 8 0M1 15h16" stroke="#333" /></>,
  pencil: <><path d="M1 15h9" stroke={K} /><path d="M8 14l2 1 6-11-2-1z" fill="#f0d020" stroke={K} /><path d="M14 3l2 1 .5-2-1.500-.5z" fill="#c02020" /></>,
  curve: <path d="M3 15c6 0 9-4 10-12" stroke={K} strokeWidth="1.200" />,
  down: <path d="M9 3v8M6 11h6l-3 4z" stroke="#ff0000" strokeWidth="2" fill="#ff0000" strokeLinejoin="round" />,
  up: <path d="M9 15V7M6 7h6L9 3z" stroke="#0000ff" strokeWidth="2" fill="#0000ff" strokeLinejoin="round" />,
  circle: <circle cx="9" cy="9" r="7" stroke={K} strokeWidth="1.200" />,
  square: <rect x="2" y="2" width="14" height="14" stroke={K} strokeWidth="1.200" />,
};

const leftTools = [["doc", "open", "saveall", "paste", "folderUp"], ["preview", "print"], ["winA", "winB", "lock", "wand", "cubes"]];
const midTools = [["grayCalc", "grayGrid", "yellowDoc"], ["wave", "arrows", "charts"], ["chartPen", "boxPen"], ["cal", "clockMan", "blackChart", "updown", "candle"], ["inout", "outin"], ["zoomIn", "zoomOut"], ["cursor", "chartT"], ["tools"], ["plusDoc"], ["grayNote"]];
const drawTools = ["trend", "vlines", "hlines", "boxLines", "arcs", "fan", "fib", "vfan", "angle", "both", "parallel", "archesI", "pencil"];
const markTools = ["curve", "down", "up", "circle", "square"];

const ToolGroups: React.FC<{ groups: string[][] }> = ({ groups }) => (
  <>
    {groups.map((g, i) => (
      <React.Fragment key={g[0]}>
        {i > 0 && <Sep />}
        {g.map((k) => <Tool key={k}><Ico>{icons[k]}</Ico></Tool>)}
      </React.Fragment>
    ))}
  </>
);

const MinGlyph = () => <svg width="9" height="9" viewBox="0 0 9 9"><path d="M1 7.500h5" stroke="#55667a" strokeWidth="2" /></svg>;
const RestoreGlyph = () => <svg width="11" height="11" viewBox="0 0 11 11" fill="none"><path d="M3.500 3V1h6v5H7.500" stroke="#55667a" /><rect x="1" y="3.500" width="6" height="6" stroke="#55667a" /><path d="M1 4.500h6" stroke="#55667a" /></svg>;
const CloseGlyph = () => <svg width="9" height="9" viewBox="0 0 9 9"><path d="M1.500 1.500l6 6M7.500 1.500l-6 6" stroke="#55667a" strokeWidth="1.800" /></svg>;

/* ---------- chart legend and scale content ---------- */
const BLUE = "#4a5cff";
const GREEN = "#00ff00";
const CYAN = "#00ffff";
type LegendRow = [string, string, number][];
const legend1: LegendRow = [
  ["GS:BUND - 30 min", BLUE, 0], ["EOE", BLUE, 15], ["06/19/2023", "#fff", 8], ["L=133.39", GREEN, 11], ["Hi=133.52", "#fff", 7.5],
  ["Lo=133.38", "#fff", 10], ["C=133.39", GREEN, 9.5], ["Close", "#fff", 10], ["133.39", CYAN, 17], ["HILOW Alert", "#fff", 9], ["132.74", GREEN, 19.5],
];
const legend2: LegendRow = [
  ["Leo Chart", "#fff", 0], ["2.52", CYAN, 18], ["8.00", "#ff0000", 10], ["-8.00", "#ff0000", 9.1], ["4.00", "#808000", 9.8], ["-4.00", "#808000", 9],
  ["0.00", "#0000ff", 10], ["Macd Ciclico", "#fff", 9.3], ["0.00", "#808080", 38],
];
const legend3: LegendRow = [
  ["CCI Smothing ekam", "#fff", 0], ["-8.48", "#808088", 17], ["120.00", "#787880", 11], ["-120.00", "#808080", 7.8], ["-8.48", "#404040", 11], ["DMI", "#fff", 10.5],
  ["21.63", GREEN, 17], ["23.50", "#ff00ff", 10.2], ["Stoc colore", "#fff", 9], ["0.98", "#c06000", 37],
];

const TOP = 89;
const priceY = (v: number) => 128 + (136.5 - v) * 98 - TOP;
const oscY = (v: number) => 688 - v * 8.96 - TOP;
const cciY = (v: number) => 887 - v * 0.5 - TOP;

const scaleTicks = [
  ...[136.5, 136, 135.5, 135, 134.5, 134, 133.5, 133, 132.5].map((v) => ({ y: priceY(v), t: v.toFixed(2) })),
  { y: oscY(12), t: "" },
  ...[10, 6, -2, -6].map((v) => ({ y: oscY(v), t: v.toFixed(2) })),
  ...[150, 50, -50, -150].map((v) => ({ y: cciY(v), t: v.toFixed(2) })),
  { y: cciY(-100), t: "" },
];
const scaleTags: [string, string, number][] = [
  ["133.39", "#6666ff", 423.5], ["132.74", "#00ff00", 487],
  ["8.00", "#ff0000", 607], ["4.00", "#666600", 641], ["2.52", "#00ffff", 657], ["0.00", "#0000ff", 680], ["-4.00", "#666600", 715], ["-8.00", "#ff0000", 751],
  ["120.00", "#7f7f7f", 817], ["-8.48", "#a2a2a2", 882], ["-120.00", "#808080", 938],
];

const dates = ["5/05", "5/08", "5/09", "5/10", "5/12", "5/15", "5/16", "5/17", "5/19", "5/22", "5/23", "5/24", "5/26", "5/29", "5/30", "6/01", "6/02", "6/05", "6/06", "6/08", "6/09", "6/12", "6/14", "6/15", "6/16", "17:00"];
const tabs = ["EURO C164", "EUROC164_2_3_Int", "EURO C55", "EURO C30", "EURO 8 Giorni", "cicli da 4 giorni", "EURO 2 giorni", "BUND C164", "BUND C164_2_Int", "BUND C55", "BUND  C30", "BUND 8 Giorni", "BUND 4 giorni", "BUND 2 giorni", "BUND-EURO Sito"];
const statusPanes: [string, number, boolean?][] = [["Acct:", 52], ["Open Psns:", 91], ["DT BP:", 63], ["Purch Pwr:", 87], ["Closed P/L:", 94], ["RT TE:", 59], ["Open P/L:", 84], ["ORDER BAR", 88, true], ["MACROS", 68, true]];
const menu: [string, number][] = [["File", 36.7], ["Edit", 39.600], ["View", 46], ["Insert", 50], ["Format", 61.600], ["Drawing", 69.400], ["Window", 69.800], ["Help", 40]];

const Legends = () => (
  <>
    {[legend1, legend2, legend3].map((row, i) => (
      <Legend key={i} $top={[1, 469, 685][i]}>
        {row.map(([t, c, g], j) => <LegendItem key={j} $c={c} $gap={g}>{t}</LegendItem>)}
      </Legend>
    ))}
  </>
);

const ChartDrawing = () => (
  <PlotSvg width="1838" height="901" viewBox="2 89 1838 901" shapeRendering="crispEdges">
    <defs>
      <clipPath id="above"><rect x="0" y="0" width="1840" height="826.7" /></clipPath>
      <clipPath id="below"><rect x="0" y="947" width="1840" height="100" /></clipPath>
    </defs>
    {gridXs.map((x) => (
      <g key={x} stroke="#5a5a5a" strokeDasharray="7 6">
        <line x1={x} x2={x} y1="108" y2="555" />
        <line x1={x} x2={x} y1="577" y2="771" />
        <line x1={x} x2={x} y1="793" y2="987" />
      </g>
    ))}
    {/* price pane */}
    <polyline points={str(price)} fill="none" stroke="#6666ff" strokeWidth="1" />
    {price.map((p, i) => <rect key={i} x={p[0] - 1.500} y={p[1] - 2} width="3" height="4" fill="#00ffff" />)}
    {maSegments.map((s, i) => (
      <g key={i} fill={s.color}>
        {sample(s.pts, 2.7).map((p, j) => <rect key={j} x={p[0] - 2} y={p[1] - 2} width="4" height="4" />)}
      </g>
    ))}
    {/* oscillator pane */}
    <g strokeWidth="1">
      <line x1="2" x2={GRID_END} y1="616.500" y2="616.500" stroke="#ff0000" />
      <line x1="2" x2={GRID_END} y1="760.500" y2="760.500" stroke="#ff0000" />
      <line x1="2" x2={GRID_END} y1="652.500" y2="652.500" stroke="#6e6e00" />
      <line x1="2" x2={GRID_END} y1="724.500" y2="724.500" stroke="#6e6e00" />
      <line x1="2" x2={GRID_END} y1="676.500" y2="676.500" stroke="#808080" strokeDasharray="4 3" />
      <line x1="2" x2={GRID_END} y1="688.500" y2="688.500" stroke="#0000ff" strokeDasharray="5 2" />
    </g>
    <polyline points={str(oscRed)} fill="none" stroke="#ff0000" />
    <polyline points={str(oscYellow)} fill="none" stroke="#ffff00" />
    <polyline points={str(oscCyan)} fill="none" stroke="#00ffff" />
    {/* cci pane */}
    <path d={histo} stroke="#505050" strokeWidth="1" />
    <line x1="2" x2={GRID_END} y1="826.500" y2="826.500" stroke="#8c8c8c" />
    <line x1="2" x2={GRID_END} y1="947.500" y2="947.500" stroke="#8c8c8c" />
    <polyline points={str(stoch)} fill="none" stroke="#d06a08" strokeDasharray="3 3" />
    <polyline points={str(dmiMagenta)} fill="none" stroke="#ff00ff" />
    <polyline points={str(dmiGreen)} fill="none" stroke="#00ff00" />
    <polyline points={str(cci)} fill="none" stroke="#a0a0a0" />
    <polyline points={str(cci)} fill="none" stroke="#ff0000" clipPath="url(#above)" />
    <polyline points={str(cci)} fill="none" stroke="#00ffff" clipPath="url(#below)" />
    {cyanDots.map((p, i) => <ellipse key={i} cx={p[0]} cy={p[1]} rx="3.800" ry="4.200" fill="#00ffff" />)}
    {redDots.map((p, i) => <ellipse key={i} cx={p[0]} cy={p[1]} rx="3.800" ry="4.200" fill="#ff0000" />)}
  </PlotSvg>
);

const App: React.FC = () => (
  <Page>
    <GlobalStyle />
    <TitleBar>
      <TitleIcon width="16" height="23" viewBox="0 0 14 21">
        <path d="M7 0c2 4 7 6 6 13-1 5-4 7-6 8-3-1-7-4-7-9 0-4 4-5 7-12z" fill="#2f62d0" />
        <path d="M7 6c1 3 3 5 2 8-1 2-2 3-2 3s-3-2-3-5 2-3 3-6z" fill="#a8d0f8" />
      </TitleIcon>
      <TitleText>TradeStation 8.1 - BUND_EURO - BUND 4 giorni - [Chart Analysis - GS:BUND  30 min  [EOE] BUND]</TitleText>
      <WindowButtons>
        <WindowButton $w={38}><svg width="16" height="6"><rect y="0" width="16" height="5" fill="#f4f4f4" stroke="#667" /></svg></WindowButton>
        <WindowButton $w={36}>
          <svg width="20" height="19" viewBox="0 0 20 19" fill="none"><path d="M7 4V1h11v12h-3" stroke="#eee" strokeWidth="1.500" /><rect x="3" y="5" width="11" height="12" stroke="#f4f4f4" strokeWidth="2" /><rect x="6.500" y="8.500" width="4" height="5" stroke="#556" /></svg>
        </WindowButton>
        <WindowButton $w={64} $close>
          <svg width="20" height="18" viewBox="0 0 20 18"><path d="M3 2l14 14M17 2L3 16" stroke="#f8f8f8" strokeWidth="4.500" /></svg>
        </WindowButton>
      </WindowButtons>
    </TitleBar>
    <MenuBar>
      <AppIcon width="19" height="18" viewBox="0 0 19 18">
        <rect width="19" height="18" fill="#0a0a0a" />
        <path d="M2 13l3-7 2 4 3-8 2 6 2-3 3 5" stroke="#22c040" fill="none" />
        <path d="M0 16h19" stroke="#c02020" strokeWidth="1.500" />
        <path d="M0 1h19" stroke="#2040a0" strokeWidth="1.500" />
      </AppIcon>
      {menu.map(([m, w]) => <MenuItem key={m} $w={w}>{m}</MenuItem>)}
      <MdiButtons>
        <MdiButton><MinGlyph /></MdiButton>
        <MdiButton><RestoreGlyph /></MdiButton>
        <MdiButton><CloseGlyph /></MdiButton>
      </MdiButtons>
    </MenuBar>
    <Toolbar>
      <Grip $w={7.300} />
      <ToolGroups groups={leftTools} />
      <Sep />
      <Combo><svg width="10" height="6"><path d="M0 0h10L5 6z" fill="#111" /></svg></Combo>
      <Tool $w={16}><svg width="6" height="10"><path d="M0 0l6 5-6 5z" fill="#111" /></svg></Tool>
      <Tool $ml={8.500}><Ico>{icons.lookup}</Ico></Tool>
      <Tool $ml={84}><Ico>{icons.grayCalc}</Ico></Tool>
      <ToolGroups groups={[midTools[0].slice(1), ...midTools.slice(1)]} />
      <Grip $w={19.500} />
      {drawTools.map((k) => <Tool key={k}><Ico>{icons[k]}</Ico></Tool>)}
      <Sep />
      {markTools.map((k) => <Tool key={k}><Ico>{icons[k]}</Ico></Tool>)}
      <Tool><AbcLabel>abc</AbcLabel></Tool>
    </Toolbar>
    <ChartFrame>
      <FloatButtons>
        <MdiButton><MinGlyph /></MdiButton>
        <MdiButton><RestoreGlyph /></MdiButton>
        <MdiButton><CloseGlyph /></MdiButton>
      </FloatButtons>
      <Panes>
        <Plot>
          <ChartDrawing />
          <Legends />
        </Plot>
        <Scale>
          {scaleTicks.map((s, i) => (
            <React.Fragment key={i}>
              <Tick style={{ top: s.y }} />
              {s.t && <ScaleLabel style={{ top: s.y }}>{s.t}</ScaleLabel>}
            </React.Fragment>
          ))}
          {scaleTags.map(([t, c, y]) => <ScaleTag key={t + y} $bg={c} style={{ top: y - TOP }}>{t}</ScaleTag>)}
          <ScaleRule style={{ top: 558 - TOP }} />
          <ScaleRule style={{ top: 774 - TOP }} />
        </Scale>
      </Panes>
      <DateAxis>
        {dates.map((d, i) => <DateCell key={d} $first={i === 0} $pad={i === 0 ? 13.400 : i === 25 ? 2 : 7}>{d}</DateCell>)}
      </DateAxis>
    </ChartFrame>
    <ScrollRow>
      <svg width="7" height="10"><path d="M7 0L0 5l7 5z" fill="#555" /></svg>
      <ScrollRight>
        <ScrollThumb><i /><i /><i /></ScrollThumb>
        <svg width="7" height="10"><path d="M0 0l7 5-7 5z" fill="#777" /></svg>
      </ScrollRight>
    </ScrollRow>
    <TabRow>
      <TabNav>
        {["M6 1v8L1 5zM0 1v8", "M6 1v8L1 5z", "M1 1v8l5-4z", "M1 1v8l5-4zM7 1v8"].map((d) => (
          <TabNavButton key={d}><svg width="8" height="10"><path d={d} fill="#666" stroke="#666" strokeWidth="0.700" /></svg></TabNavButton>
        ))}
      </TabNav>
      {tabs.map((t) => <Tab key={t} $active={t === "BUND 4 giorni"}>{t}</Tab>)}
    </TabRow>
    <StatusBar>
      <StatusMain>For Help, press F1</StatusMain>
      {statusPanes.map(([t, w, g]) => <StatusPane key={t} $w={w} $green={g}>{t}</StatusPane>)}
      <StatusPane $w={19}><svg width="11" height="12" viewBox="0 0 11 12"><circle cx="5.500" cy="6" r="5" fill="#d00010" /><circle cx="4" cy="4" r="1.500" fill="#ff9090" /></svg></StatusPane>
      <StatusPane $w={124}>19/06/2023 09:12</StatusPane>
    </StatusBar>
    <BottomEdge />
  </Page>
);

export default App;
